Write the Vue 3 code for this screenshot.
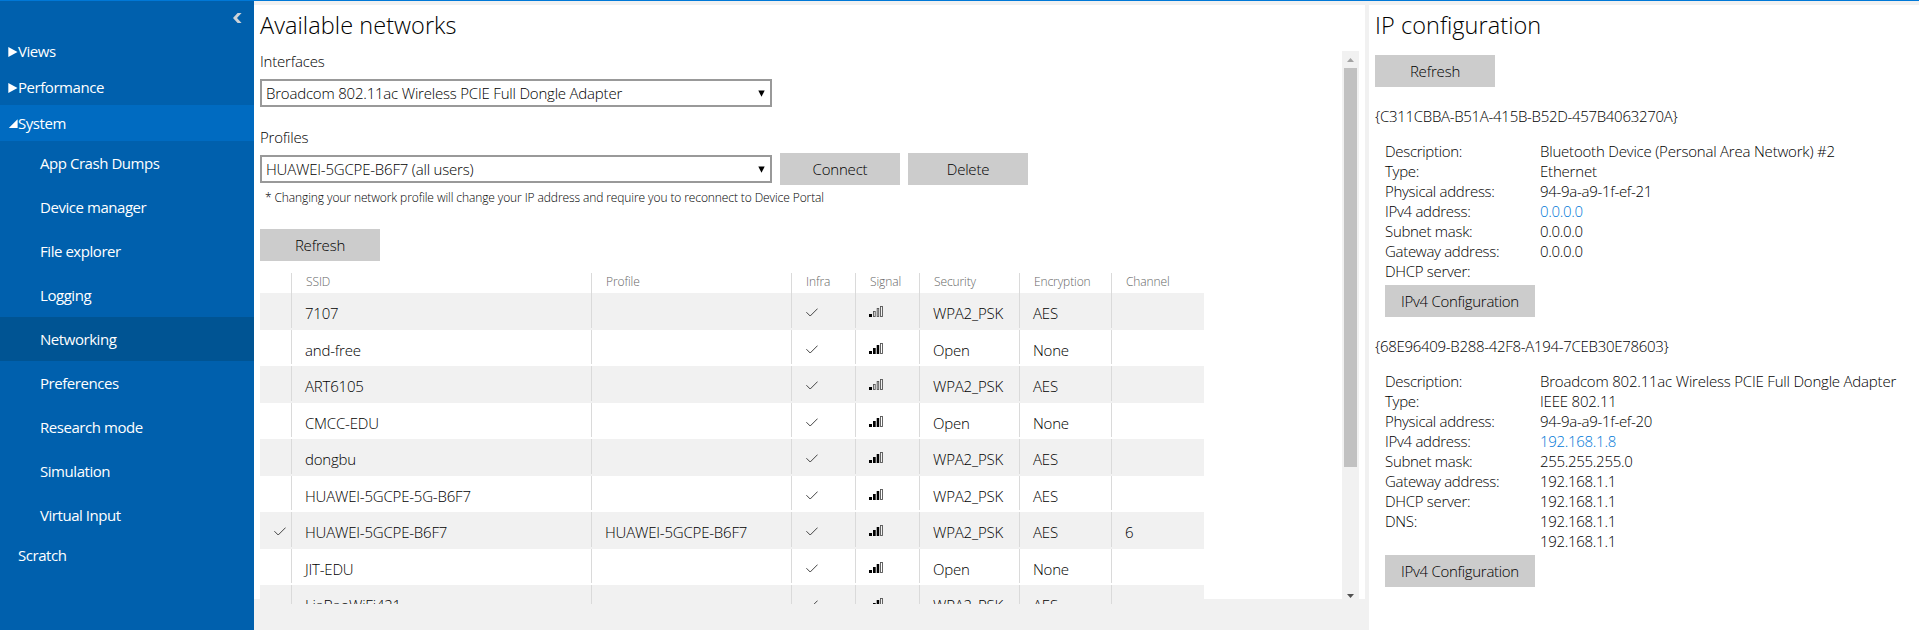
<script setup>
const subItems = [
  'App Crash Dumps', 'Device manager', 'File explorer', 'Logging', 'Networking',
  'Preferences', 'Research mode', 'Simulation', 'Virtual Input',
]

const headers = ['', 'SSID', 'Profile', 'Infra', 'Signal', 'Security', 'Encryption', 'Channel']

const networks = [
  { ssid: '7107', bars: 1, security: 'WPA2_PSK', enc: 'AES' },
  { ssid: 'and-free', bars: 3, security: 'Open', enc: 'None' },
  { ssid: 'ART6105', bars: 1, security: 'WPA2_PSK', enc: 'AES' },
  { ssid: 'CMCC-EDU', bars: 3, security: 'Open', enc: 'None' },
  { ssid: 'dongbu', bars: 3, security: 'WPA2_PSK', enc: 'AES' },
  { ssid: 'HUAWEI-5GCPE-5G-B6F7', bars: 3, security: 'WPA2_PSK', enc: 'AES' },
  { ssid: 'HUAWEI-5GCPE-B6F7', profile: 'HUAWEI-5GCPE-B6F7', bars: 3, security: 'WPA2_PSK', enc: 'AES', channel: '6', connected: true },
  { ssid: 'JIT-EDU', bars: 3, security: 'Open', enc: 'None' },
  { ssid: 'LiaBaoWiFi421', bars: 3, security: 'WPA2_PSK', enc: 'AES' },
]

const adapters = [
  {
    id: '{C311CBBA-B51A-415B-B52D-457B4063270A}',
    rows: [
      ['Description:', 'Bluetooth Device (Personal Area Network) #2'],
      ['Type:', 'Ethernet'],
      ['Physical address:', '94-9a-a9-1f-ef-21'],
      ['IPv4 address:', '0.0.0.0', true],
      ['Subnet mask:', '0.0.0.0'],
      ['Gateway address:', '0.0.0.0'],
      ['DHCP server:', ''],
    ],
  },
  {
    id: '{68E96409-B288-42F8-A194-7CEB30E78603}',
    rows: [
      ['Description:', 'Broadcom 802.11ac Wireless PCIE Full Dongle Adapter'],
      ['Type:', 'IEEE 802.11'],
      ['Physical address:', '94-9a-a9-1f-ef-20'],
      ['IPv4 address:', '192.168.1.8', true],
      ['Subnet mask:', '255.255.255.0'],
      ['Gateway address:', '192.168.1.1'],
      ['DHCP server:', '192.168.1.1'],
      ['DNS:', '192.168.1.1'],
      ['', '192.168.1.1'],
    ],
  },
]

const bars = [
  { x: 0, h: 3, w: 3 },
  { x: 4, h: 6, w: 2.7 },
  { x: 7.7, h: 9, w: 2.5 },
  { x: 11, h: 11, w: 3 },
]
</script>

<template>
  <div class="page">
    <nav class="sidebar">
      <div class="collapse">
        <svg width="9" height="10" viewBox="0 0 9 10"><path d="M4.6 0H8.6L4 5L8.6 10H4.6L0 5Z" fill="#ccd2d8" /></svg>
      </div>
      <div class="group">
        <svg class="arrow" width="10" height="12" viewBox="0 0 10 12"><path d="M0.3 1V11L9.5 6Z" fill="#fff" /></svg>
        <span>Views</span>
      </div>
      <div class="group">
        <svg class="arrow" width="10" height="12" viewBox="0 0 10 12"><path d="M0.3 1V11L9.5 6Z" fill="#fff" /></svg>
        <span>Performance</span>
      </div>
      <div class="group open">
        <svg class="arrow" width="10" height="12" viewBox="0 0 10 12"><path d="M0.8 10H9.6V1.2Z" fill="#fff" /></svg>
        <span>System</span>
      </div>
      <div v-for="s in subItems" :key="s" class="sub" :class="{ active: s === 'Networking' }">{{ s }}</div>
      <div class="group"><i class="arrow"></i><span>Scratch</span></div>
    </nav>

    <main class="networks">
      <h2>Available networks</h2>
      <div class="scroller">
        <div class="content">
          <div class="label">Interfaces</div>
          <div class="select">
            <span>Broadcom 802.11ac Wireless PCIE Full Dongle Adapter</span>
            <svg width="7" height="7" viewBox="0 0 7 7"><path d="M0.3 0.5H6.7L3.5 6.7Z" /></svg>
          </div>
          <div class="label second">Profiles</div>
          <div class="profile-line">
            <div class="select">
              <span>HUAWEI-5GCPE-B6F7 (all users)</span>
              <svg width="7" height="7" viewBox="0 0 7 7"><path d="M0.3 0.5H6.7L3.5 6.7Z" /></svg>
            </div>
            <button>Connect</button>
            <button>Delete</button>
          </div>
          <div class="note">* Changing your network profile will change your IP address and require you to reconnect to Device Portal</div>
          <button class="refresh">Refresh</button>
          <div class="table">
            <div class="row head">
              <div v-for="(h, i) in headers" :key="i" class="cell">{{ h }}</div>
            </div>
            <div v-for="n in networks" :key="n.ssid" class="row">
              <div class="cell mark">
                <svg v-if="n.connected" width="12" height="9" viewBox="0 0 12 9"><path class="tick" d="M0.4 4.2L4.2 8L11.6 0.6" /></svg>
              </div>
              <div class="cell">{{ n.ssid }}</div>
              <div class="cell">{{ n.profile }}</div>
              <div class="cell icon">
                <svg width="12" height="9" viewBox="0 0 12 9"><path class="tick" d="M0.4 4.2L4.2 8L11.6 0.6" /></svg>
              </div>
              <div class="cell icon signal">
                <svg width="14" height="11" viewBox="0 0 14 11">
                  <template v-for="(b, i) in bars" :key="i">
                    <rect v-if="i < n.bars" :x="b.x" :y="11 - b.h" :width="b.w" :height="b.h" fill="#000" />
                    <rect v-else :x="b.x + 0.5" :y="11.5 - b.h" :width="b.w - 1" :height="b.h - 1" fill="none" stroke="#555" stroke-width="0.9" />
                  </template>
                </svg>
              </div>
              <div class="cell">{{ n.security }}</div>
              <div class="cell">{{ n.enc }}</div>
              <div class="cell">{{ n.channel }}</div>
            </div>
          </div>
        </div>
        <div class="scrollbar">
          <div class="sb-btn"><svg width="7" height="4" viewBox="0 0 7 4"><path d="M0 4L3.5 0L7 4Z" fill="#a3a3a3" /></svg></div>
          <div class="thumb"></div>
          <div class="sb-btn end"><svg width="7" height="4" viewBox="0 0 7 4"><path d="M0 0H7L3.5 4Z" fill="#505050" /></svg></div>
        </div>
      </div>
    </main>

    <section class="ipconfig">
      <h2>IP configuration</h2>
      <button>Refresh</button>
      <div v-for="a in adapters" :key="a.id" class="adapter">
        <div class="guid">{{ a.id }}</div>
        <div class="details">
          <div v-for="(r, i) in a.rows" :key="i" class="detail">
            <span class="key">{{ r[0] }}</span>
            <span :class="{ link: r[2], numeric: i > 1 }">{{ r[1] }}</span>
          </div>
          <button class="wide">IPv4 Configuration</button>
        </div>
      </div>
    </section>
  </div>
</template>

<style>
body { margin: 0; overflow: hidden; }
</style>

<style scoped>
.page {
  box-sizing: border-box;
  width: 1919px;
  height: 630px;
  display: flex;
  overflow: hidden;
  border-top: 1px solid #0078d7;
  background: #f1f1f1;
  color: #000;
  font: 350 15px/20px "Open Sans", "Noto Sans", sans-serif;
  letter-spacing: -0.2px;
  white-space: nowrap;
}
.sidebar {
  width: 254px;
  flex: none;
  background: #0060ad;
  color: #fff;
  font-weight: 400;
  letter-spacing: -0.45px;
}
.collapse { height: 32px; padding: 12px 12px 0 0; box-sizing: border-box; display: flex; justify-content: flex-end; }
.group { height: 36px; display: flex; align-items: center; padding-left: 8px; }
.group.open { background: #006bc1; }
.arrow { width: 10px; flex: none; margin-top: 2px; }
.sub { height: 44px; line-height: 44px; padding-left: 40px; }
.sub.active { background: #005493; }

h2 { margin: 0; font-size: 23.5px; line-height: 32px; font-weight: 350; letter-spacing: 0.05px; }
.networks {
  box-sizing: border-box;
  width: 1111px;
  height: 594px;
  flex: none;
  margin-top: 4px;
  padding: 4px 6px 0;
  background: #fff;
}
.scroller {
  display: flex;
  justify-content: space-between;
  height: 553px;
  margin-top: 10px;
  overflow: hidden;
}
.label.second { margin-top: 20px; height: 20px; }
.select {
  box-sizing: border-box;
  width: 512px;
  height: 28px;
  padding: 0 5px 0 4px;
  border: 2px solid #999;
  display: flex;
  align-items: center;
  justify-content: space-between;
}
.label + .select { margin-top: 8px; }
.profile-line { display: flex; align-items: center; gap: 8px; margin-top: 6px; }
button {
  display: block;
  width: 120px;
  height: 32px;
  padding: 0 0 1px;
  border: 0;
  background: #ccc;
  color: inherit;
  font: inherit;
  letter-spacing: inherit;
}
.note { margin: 3px 0 0 5px; font-size: 12px; letter-spacing: -0.1px; }
.refresh { margin-top: 21px; }
.table { margin-top: 12px; width: 944px; }
.row {
  display: grid;
  grid-template-columns: 32px 300px 200px 64px 64px 100px 92px 92px;
  height: 36.5px;
}
.row:nth-child(even) { background: #f1f1f1; }
.row.head { height: 20px; font-size: 12px; color: #666; letter-spacing: -0.1px; }
.cell {
  box-sizing: border-box;
  height: 34.5px;
  padding: 10px 0 0 13px;
  border-right: 1px solid #dadada;
}
.cell:last-child { border-right: 0; }
.head .cell { height: 20px; padding: 0 0 0 14px; line-height: 18px; }
.cell.mark, .cell.icon { padding-top: 15px; line-height: 0; }
.cell.mark { padding-left: 14px; }
.cell.icon { padding-left: 14px; }
.cell.signal { padding-top: 13px; padding-left: 13px; }
.tick { fill: none; stroke: #444; stroke-width: 1; }
.scrollbar { width: 17px; background: #f1f1f1; display: flex; flex-direction: column; }
.sb-btn { height: 17px; display: flex; align-items: center; justify-content: center; }
.sb-btn.end { margin-top: auto; }
.thumb { height: 399px; margin: 0 2px; background: #c1c1c1; }

.ipconfig { flex: 1; margin: 4px 0 0 4px; padding: 4px 6px 0; background: #fff; }
.ipconfig > button { margin-top: 14px; }
.adapter { padding-top: 19px; }
.guid { letter-spacing: -0.3px; }
.details { margin: 15px 0 0 10px; }
.detail { display: grid; grid-template-columns: 155px 1fr; height: 20px; }
.key, .numeric { letter-spacing: -0.3px; }
.link { color: #0078d7; }
.wide { width: 150px; margin-top: 4px; letter-spacing: -0.3px; }
</style>
